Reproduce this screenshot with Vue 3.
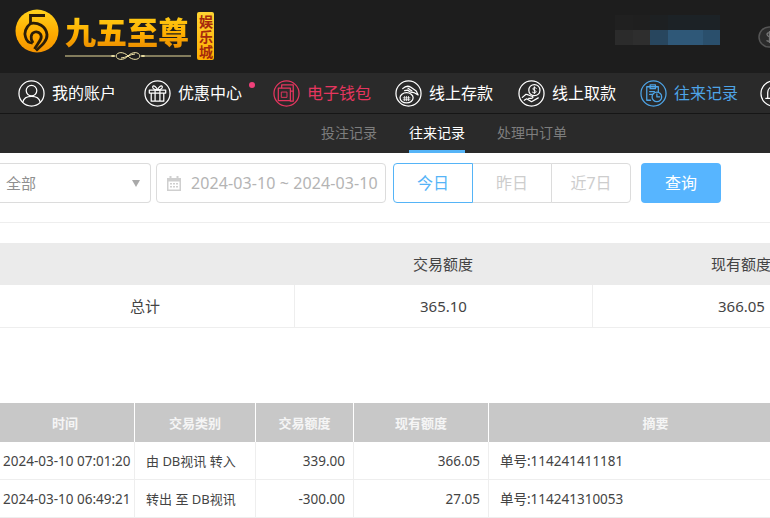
<script setup>
const navItems = [
  { label: '我的账户', icon: 'user', cls: 'first' },
  { label: '优惠中心', icon: 'gift', cls: 'promo', dot: true },
  { label: '电子钱包', icon: 'wallet', cls: 'red' },
  { label: '线上存款', icon: 'deposit', cls: 'wide' },
  { label: '线上取款', icon: 'withdraw' },
  { label: '往来记录', icon: 'record', cls: 'blue' },
  { label: '', icon: 'bell' }
]

const subTabs = ['投注记录', '往来记录', '处理中订单']
const quickDates = ['今日', '昨日', '近7日']

// 打码的用户名
const mosaic = [
  ['#202020', '#1f1f1f', '#1d2022', '#1c2226', '#1c2226', '#1c2226'],
  ['#2b2b2b', '#2e2e2e', '#28465e', '#2f5878', '#2f5878', '#2a4f6c']
]

const records = [
  { time: '2024-03-10 07:01:20', type: '由 DB视讯 转入', amount: '339.00', balance: '366.05', memo: '单号:114241411181' },
  { time: '2024-03-10 06:49:21', type: '转出 至 DB视讯', amount: '-300.00', balance: '27.05', memo: '单号:114241310053' }
]
</script>

<template>
  <div class="page">
    <header class="top">
      <div class="logo">
        <svg class="logo-mark" viewBox="0 0 44 44" width="44" height="44">
          <defs>
            <linearGradient id="gold" x1="0" y1="0" x2="0" y2="1">
              <stop offset="0" stop-color="#ffd21c" />
              <stop offset="0.55" stop-color="#ffac00" />
              <stop offset="1" stop-color="#f59300" />
            </linearGradient>
          </defs>
          <circle cx="22" cy="22" r="21.500" fill="url(#gold)" />
          <g fill="none" stroke="#2a1c08" stroke-width="2.800">
            <path d="M30 6.500H15.500V14.500" />
            <path d="M15 14.500C23 13 31 17 32 25.500C32.500 32 26 37 21 41.500" />
            <path d="M15.500 14.500C10.500 18.500 9 24 10.500 28C11.500 32 14.500 34 17.500 34" />
            <path d="M18 34C15 30 15.500 24 20 23C25 22 27.500 27 25.500 30.500C24 33.500 21.500 36.500 19.500 40" />
          </g>
        </svg>
        <div class="logo-text">
          <div class="logo-name">九五至尊</div>
          <svg class="logo-line" viewBox="0 0 126 10" width="126" height="10">
            <path d="M0 5H46M80 5H126" stroke="#e9dc9c" stroke-width="1" />
            <path d="M46 5h4m-2-1v2M76 5h4m-2-1v2" stroke="#f2e6a8" stroke-width="1.500" />
            <path d="M63 5C59 0.500 52 0.500 51 5C52 9.500 59 9.500 63 5C67 0.500 74 0.500 75 5C74 9.500 67 9.500 63 5Z" fill="none" stroke="#f2e6a8" stroke-width="1" />
            <path d="M56 7C60 7 66 3 70 3" fill="none" stroke="#f2e6a8" stroke-width="1" />
          </svg>
        </div>
        <div class="logo-badge">娱乐城</div>
      </div>
      <div class="mosaic">
        <div v-for="(row, r) in mosaic" :key="r" class="mosaic-row">
          <span v-for="(c, i) in row" :key="i" :style="{ background: c }"></span>
        </div>
      </div>
      <svg class="coin" viewBox="0 0 22 22" width="22" height="22">
        <circle cx="11" cy="11" r="10" fill="#2b2b2b" stroke="#555" stroke-width="1.500" />
        <path d="M14 7.500C13 6.500 9 6 9 8.500C9 11 14 11 14 13.500C14 16 10 15.500 8.500 14.500M11.500 5V17" fill="none" stroke="#777" stroke-width="1.300" />
      </svg>
    </header>

    <nav class="nav">
      <a v-for="item in navItems" :key="item.icon" class="nav-item" :class="item.cls">
        <svg class="nav-icon" viewBox="0 0 28 28" width="27" height="27" fill="none" stroke="currentColor" stroke-width="1.300" stroke-linecap="round" stroke-linejoin="round">
          <circle cx="14" cy="14" r="13" />
          <template v-if="item.icon === 'user'">
            <circle cx="14" cy="11" r="5.500" />
            <path d="M5 23C6 18.500 10 17 14 17C18 17 22 18.500 23 23" />
          </template>
          <template v-else-if="item.icon === 'gift'">
            <path d="M5.500 10.500H22.500V13.500H5.500ZM7.500 13.500V22H20.500V13.500M11.500 10.500V22M16.500 10.500V22" />
            <path d="M14 10.500C11 10 8.500 9 9 7C10 5 13 7 14 10.500C15 7 18 5 19 7C19.500 9 17 10 14 10.500Z" />
          </template>
          <template v-else-if="item.icon === 'wallet'">
            <path d="M9 8V5H21V22H18" />
            <path d="M5.500 8.500H18V21.500H5.500V8.500ZM18 11.500H21" />
            <path d="M9 12.500H14.500V18H9Z" stroke-width="1" />
          </template>
          <template v-else-if="item.icon === 'deposit'">
            <path d="M8 9C10.500 6.500 14 6 16.500 7.500L22 11.500L24 15.500L19.500 13L16 12.500L13 10.500L10 11" />
            <path d="M13.500 8.500L17.500 11.500" />
            <ellipse cx="12" cy="18.500" rx="6.800" ry="5.300" />
            <path d="M8.500 18.500H15.500M8.500 20.500H15.500M10 17V21.500M12 17V21.500M14 17V21.500" stroke-width="0.800" />
          </template>
          <template v-else-if="item.icon === 'withdraw'">
            <circle cx="17" cy="10.500" r="5.800" />
            <path d="M19 8.600C18 7.500 15.500 7.500 15.500 9.300C15.500 11 18.800 10.500 18.800 12.200C18.800 13.800 16 13.500 15 12.700M17 7V14" stroke-width="1" />
            <path d="M4.500 18L8 15C10 14.500 12 16.500 15 17C16 17.500 15.500 19 14 19H11" />
            <path d="M6.500 21L9 19.500L14 22.500L21 18.500" />
          </template>
          <template v-else-if="item.icon === 'record'">
            <path d="M11 21H7V7H19V12.500M10.500 5V9H16V5Z" />
            <circle cx="17.500" cy="17.500" r="5" />
            <path d="M17.500 14.500V17.500H20.500M10 12H15M10 15H13" />
          </template>
          <template v-else>
            <path d="M8 19V13C8 9.500 10.500 7 14 7C17.500 7 20 9.500 20 13V19ZM6 19H22M12 22H16" />
          </template>
        </svg>
        <span v-if="item.label" class="nav-label">{{ item.label }}</span>
        <i v-if="item.dot" class="nav-dot"></i>
      </a>
    </nav>

    <div class="subnav">
      <a v-for="(tab, i) in subTabs" :key="tab" class="sub-tab" :class="{ active: i === 1 }">{{ tab }}</a>
    </div>

    <section class="toolbar">
      <div class="select">
        <span>全部</span>
        <i class="caret"></i>
      </div>
      <div class="date">
        <svg viewBox="0 0 16 16" width="16" height="16" fill="#cfcfcf">
          <path d="M1 3H15V16H1ZM2.500 6.500V14.500H13.500V6.500Z" />
          <path d="M3.500 1H5.500V4H3.500ZM10.500 1H12.500V4H10.500Z" />
          <path d="M4 8H6V9.500H4ZM7 8H9V9.500H7ZM10 8H12V9.500H10ZM4 11H6V12.500H4ZM7 11H9V12.500H7ZM10 11H12V12.500H10Z" />
        </svg>
        <span>2024-03-10 ~ 2024-03-10</span>
      </div>
      <div class="quick">
        <button v-for="(d, i) in quickDates" :key="d" class="quick-btn" :class="{ on: i === 0 }">{{ d }}</button>
      </div>
      <button class="query">查询</button>
    </section>

    <section class="summary">
      <div class="sum-row sum-head">
        <div></div>
        <div>交易额度</div>
        <div>现有额度</div>
      </div>
      <div class="sum-row sum-body">
        <div>总计</div>
        <div>365.10</div>
        <div>366.05</div>
      </div>
    </section>

    <section class="records">
      <div class="rec-row rec-head">
        <div>时间</div>
        <div>交易类别</div>
        <div>交易额度</div>
        <div>现有额度</div>
        <div>摘要</div>
      </div>
      <div v-for="r in records" :key="r.time" class="rec-row rec-body">
        <div class="t-time">{{ r.time }}</div>
        <div class="t-type">{{ r.type }}</div>
        <div class="t-num">{{ r.amount }}</div>
        <div class="t-num">{{ r.balance }}</div>
        <div class="t-memo">{{ r.memo }}</div>
      </div>
    </section>
  </div>
</template>

<style>
html,
body {
  margin: 0;
  background: #fff;
  overflow: hidden;
}
</style>

<style scoped>
.page {
  width: 770px;
  height: 518px;
  overflow: hidden;
  font-family: "Noto Sans", "Noto Sans CJK SC", sans-serif;
  color: #444;
}

.top {
  height: 73px;
  background: #1d1d1d;
  display: flex;
  align-items: flex-start;
  box-sizing: border-box;
  padding: 9px 0 0 15px;
}

.logo {
  display: flex;
  align-items: flex-start;
  flex: none;
  width: 600px;
}

.logo-text {
  margin-left: 6px;
  width: 132px;
}

.logo-name {
  font-family: "Noto Sans CJK SC", sans-serif;
  font-weight: 900;
  font-size: 31px;
  line-height: 38px;
  margin-top: 3px;
  white-space: nowrap;
  background: linear-gradient(180deg, #ffd21a, #ffb000 55%, #e88a00);
  -webkit-background-clip: text;
  background-clip: text;
  color: transparent;
}

.logo-line {
  display: block;
  margin-top: 1px;
}

.logo-badge {
  font-family: "Noto Sans CJK SC", sans-serif;
  font-weight: 700;
  writing-mode: vertical-rl;
  box-sizing: border-box;
  width: 17px;
  height: 48px;
  margin-top: 3px;
  padding-top: 2px;
  border-radius: 2px;
  background: linear-gradient(180deg, #ffd433, #ffae00);
  color: #a5290c;
  font-size: 14px;
  line-height: 17px;
  letter-spacing: 1px;
  text-align: center;
}

.mosaic {
  margin-top: 6px;
  flex: none;
}

.mosaic-row {
  display: flex;
}

.mosaic-row span {
  width: 17.500px;
  height: 15px;
}

.coin {
  margin-left: 38px;
  margin-top: 17px;
  flex: none;
}

.nav {
  height: 40px;
  background: #2a2a2a;
  border-bottom: 1px solid #161616;
  display: flex;
  align-items: center;
  color: #fff;
  padding-left: 6px;
}

.nav-item {
  position: relative;
  flex: none;
  display: flex;
  align-items: center;
  gap: 7px;
  padding: 0 12px;
  font-size: 16px;
  white-space: nowrap;
}

.nav-item.first {
  padding-right: 16px;
}

.nav-item.promo {
  padding-right: 19px;
}

.nav-item.wide {
  padding-right: 13px;
}

.nav-item.red {
  color: #e5365f;
}

.nav-item.blue {
  color: #4ea4e6;
  padding-right: 10px;
}

.nav-icon {
  flex: none;
}

.nav-label {
  width: 64px;
  margin-bottom: 2px;
}

.nav-dot {
  position: absolute;
  right: 6px;
  top: 2px;
  width: 6px;
  height: 6px;
  border-radius: 50%;
  background: #f0407a;
}

.subnav {
  height: 39px;
  background: #2a2a2a;
  display: flex;
  gap: 32px;
  padding-left: 321px;
  font-size: 14px;
  color: #7d7d7d;
}

.sub-tab {
  line-height: 38px;
  height: 39px;
  box-sizing: border-box;
}

.sub-tab.active {
  color: #fff;
  border-bottom: 3px solid #55b4f7;
}

.toolbar {
  height: 70px;
  border-bottom: 1px solid #eee;
  display: flex;
  align-items: flex-start;
  padding-top: 10px;
  box-sizing: border-box;
  font-size: 15px;
}

.select {
  width: 151px;
  height: 40px;
  box-sizing: border-box;
  border: 1px solid #dcdcdc;
  border-left: 0;
  border-radius: 0 4px 4px 0;
  display: flex;
  align-items: center;
  justify-content: space-between;
  padding: 0 10px 2px 6px;
  color: #8f8f8f;
}

.caret {
  width: 0;
  height: 0;
  margin-top: 2px;
  border-left: 4px solid transparent;
  border-right: 4px solid transparent;
  border-top: 7px solid #a9a9a9;
}

.date {
  width: 230px;
  height: 40px;
  margin-left: 5px;
  box-sizing: border-box;
  border: 1px solid #dcdcdc;
  border-radius: 4px;
  display: flex;
  align-items: center;
  gap: 9px;
  padding-left: 9px;
  font-size: 16px;
  letter-spacing: 0.100px;
  color: #b4b4b4;
  white-space: nowrap;
}

.quick {
  display: flex;
  margin-left: 7px;
}

.quick-btn {
  width: 80px;
  height: 40px;
  margin-left: -1px;
  border: 1px solid #dcdcdc;
  background: #fff;
  font: inherit;
  font-size: 16px;
  color: #cdcdcd;
  padding: 0 0 2px;
}

.quick-btn:first-child {
  margin-left: 0;
  border-radius: 4px 0 0 4px;
}

.quick-btn:last-child {
  border-radius: 0 4px 4px 0;
}

.quick-btn.on {
  position: relative;
  border-color: #55b4f7;
  color: #55b4f7;
}

.query {
  width: 80px;
  height: 40px;
  margin-left: 10px;
  border: 0;
  border-radius: 4px;
  background: #57b5ff;
  color: #fff;
  font: inherit;
  font-size: 16px;
  padding: 0 0 2px;
}

.summary {
  width: 894px;
  margin-left: -4px;
  margin-top: 20px;
  font-size: 15px;
}

.sum-row {
  display: grid;
  grid-template-columns: 298px 298px 298px;
  text-align: center;
  height: 42px;
  line-height: 42px;
}

.sum-head {
  background: #ebebeb;
}

.sum-body {
  height: 43px;
  box-sizing: border-box;
  border-bottom: 1px solid #eee;
}

.sum-body div + div {
  border-left: 1px solid #eee;
}

.records {
  width: 830px;
  margin-left: -4px;
  margin-top: 75px;
  font-size: 13.500px;
}

.rec-row {
  display: grid;
  grid-template-columns: 138px 121px 98px 135px 334px;
}

.rec-head {
  height: 39px;
  line-height: 40px;
  font-size: 13px;
  background: #c8c8c8;
  color: #f5f5f5;
  font-weight: 700;
  text-align: center;
}

.rec-head div + div {
  border-left: 1px solid #fff;
}

.rec-body {
  height: 38px;
  box-sizing: border-box;
  line-height: 39px;
  border-bottom: 1px solid #eee;
}

.rec-body div + div {
  border-left: 1px solid #eee;
}

.t-time {
  padding-left: 7px;
  white-space: nowrap;
}

.t-type {
  padding-left: 11px;
  font-size: 13px;
  white-space: nowrap;
}

.t-num {
  text-align: right;
  padding-right: 8px;
}

.t-memo {
  padding-left: 11px;
}
</style>
